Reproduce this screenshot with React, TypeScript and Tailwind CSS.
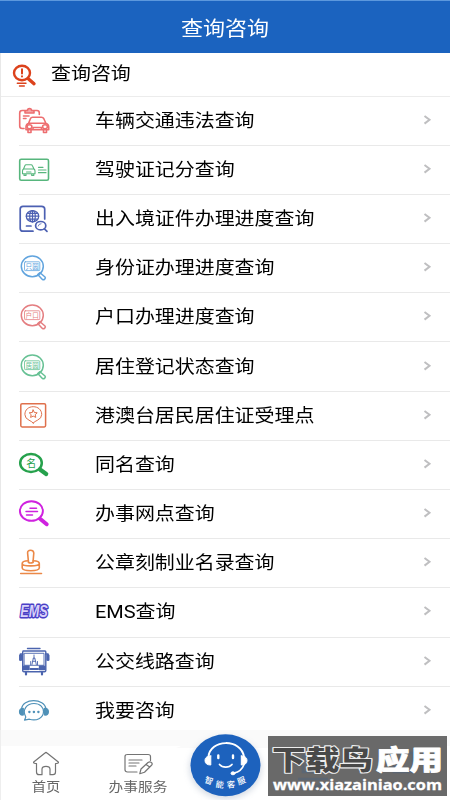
import React from "react";

type IconProps = { children: React.ReactNode; color: string; width?: number };

function Icon({ children, color, width = 1.3 }: IconProps) {
  return (
    <svg
      width="34"
      height="32"
      viewBox="0 0 34 32"
      fill="none"
      stroke={color}
      strokeWidth={width}
      strokeLinecap="round"
      strokeLinejoin="round"
      className="block shrink-0"
    >
      {children}
    </svg>
  );
}

const glyphFont = "'Noto Sans CJK SC', sans-serif";

function Lens({ color, label }: { color: string; label: string }) {
  return (
    <Icon color={color} width={1.5}>
      <ellipse cx="14.3" cy="14.3" rx="11" ry="10.4" />
      <rect x="6.5" y="9.8" width="15.3" height="8.8" rx="0.8" strokeWidth="0.8" />
      <text x="14.2" y="16.8" fontSize="6.6" textAnchor="middle" fill={color} stroke="none" fontFamily={glyphFont}>
        {label}
      </text>
      <path d="M19.7 22.5 L22 20.7 L27 25 C28.2 26.3 25.9 28.5 24.4 27.4 Z" />
    </Icon>
  );
}

const carIcon = (
  <Icon color="#ed6e70" width={1.6}>
    <path d="M6 23.5H4.2Q1.7 23.5 1.7 21V8Q1.7 5.5 4.2 5.5H6.5M16.5 5.5H19Q21.3 5.5 21.3 8V9.5" />
    <path d="M7 8V5.5H9.5Q9.5 3.5 11.5 3.5T13.5 5.5H16V8Z" fill="#ed6e70" fillOpacity=".6" />
    <path d="M5.5 11H11M5.5 13.5H8" />
    <path d="M10.5 18.5L12.5 13.5Q13 12.3 14.5 12.3H23.5Q25 12.3 25.7 13.5L28 18.5Q30.7 19.2 30.7 22V24.8H8V22Q8 19.2 10.5 18.5ZM10.5 18.2H28M10 25V27.5H13V25M25.5 25V27.5H28.5V25M15 24.5V22.5H23.5V24.5" />
    <ellipse cx="11.5" cy="21.8" rx="2.4" ry="2" />
    <ellipse cx="27" cy="21.8" rx="2.4" ry="2" />
  </Icon>
);

const licenceIcon = (
  <Icon color="#57b67d">
    <rect x="1.7" y="5.2" width="28.8" height="21" rx="1.5" strokeWidth="1.6" />
    <path strokeWidth="1.1" d="M5.5 15L7 11.5Q7.3 10.8 8 10.8H13.2Q14 10.8 14.3 11.5L16 15Q17 15.8 17 17V19.7H4.5V17Q4.5 15.8 5.5 15ZM5.5 15H16M6 20V21.4H8V20M13.7 20V21.4H15.8V20M8.5 18H13" />
    <path strokeWidth="1.2" d="M20.5 13.3H25M20.5 16H28M20.5 18.7H28" />
  </Icon>
);

const passportIcon = (
  <Icon color="#4c60b2" width={1.7}>
    <path d="M15 28.2H5Q2.2 28.2 2.2 25.5V6Q2.2 3.3 5 3.3H23.5Q26.7 3.3 26.7 6V16" />
    <ellipse cx="14.5" cy="13.2" rx="6.2" ry="5.6" strokeWidth="1.3" />
    <ellipse cx="14.5" cy="13.2" rx="2.8" ry="5.6" strokeWidth="1.2" />
    <path strokeWidth="1.2" d="M14.5 7.6V18.8M8.3 13.2H20.7M9.5 10.3H19.5M9.5 16.1H19.5" />
    <path d="M8.5 23H13" />
    <ellipse cx="22.7" cy="22.7" rx="5.1" ry="4.2" />
    <path d="M26.4 25.8L29 28.3" />
    <path strokeWidth=".8" d="M20.2 23Q20.5 20.8 23 20.7" />
  </Icon>
);

const residenceIcon = (
  <Icon color="#df704c">
    <rect x="2.8" y="3.7" width="24.8" height="23.2" rx="1.3" strokeWidth="1.5" />
    <path strokeWidth="1" d="M15.2 23Q13.5 21.3 11 20.2Q6.9 18.3 6.9 14.5C6.9 9.7 10.5 6.7 15.2 6.7S23.7 9.7 23.7 14.5Q23.7 18.3 19.5 20.2Q17 21.3 15.2 23Z" />
    <path strokeWidth="1" d="M15.2 10L16.4 12.5L19.2 12.8L17.2 14.7L17.8 17.4L15.2 16.1L12.6 17.4L13.2 14.7L11.2 12.8L14 12.5Z" />
  </Icon>
);

const sameNameIcon = (
  <Icon color="#26a14c" width={2.5}>
    <ellipse cx="13" cy="14" rx="10.8" ry="9" />
    <path d="M22 20.5L28.2 25" strokeWidth="4.2" />
    <text x="13.2" y="17.6" fontSize="10" textAnchor="middle" fill="#26a14c" stroke="none" fontFamily={glyphFont}>名</text>
  </Icon>
);

const branchIcon = (
  <Icon color="#cf22df" width={1.9}>
    <ellipse cx="13.4" cy="13" rx="11.5" ry="9.8" />
    <path d="M22 20.8L28.7 26.2" strokeWidth="4" />
    <path strokeWidth="1.5" d="M12 10.3H18.5M8 13.5H19.5M8.5 17H14.5" />
  </Icon>
);

const stampIcon = (
  <Icon color="#eb8847" width={1.6}>
    <path d="M10.5 15.2L9.6 6Q9.5 3.3 12.5 3.3T15.8 6L15 15.2" />
    <path d="M10.3 13.8Q4.2 14 4.2 16.5Q4.2 18.9 12.8 18.9T21.3 16.5Q21.3 14 15.2 13.8M4.2 16.5V21Q4.5 23.7 12.8 23.7T21.3 21V16.5M2.7 26.5H23.5M10.5 15.5Q12.5 16.4 15 15.5" />
  </Icon>
);

const emsIcon = (
  <Icon color="#4136bd" width={1}>
    <text
      x="2.2"
      y="20.6"
      fontSize="16"
      fontWeight="700"
      fontStyle="italic"
      fill="#d9d2fa"
      stroke="#4a3fc6"
      strokeWidth="2.8"
      paintOrder="stroke"
      textLength="27.5"
      lengthAdjust="spacingAndGlyphs"
      fontFamily="'Liberation Sans', sans-serif"
    >
      EMS
    </text>
  </Icon>
);

const busIcon = (
  <Icon color="#4b64ae" width={1.4}>
    <path d="M9.5 2.5H22M5 5H27Q27.8 5 27.8 6V24.5Q27.8 25.8 26.5 25.8H6Q4.7 25.8 4.7 24.5V6Q4.7 5 5.5 5" />
    <path d="M4.7 8H2.5V14M27.8 8H30V14" strokeWidth="1.7" />
    <path d="M1.8 9.3H3.5V14H1.8ZM29 9.3H30.8V14H29Z" fill="#4b64ae" />
    <path d="M6.5 7.3H26V19.3H6.5Z" strokeWidth=".9" />
    <path d="M16 9V13M14 18.5L15.3 12H16.8L18.3 18.5M14.7 15.3H17.5M12.7 18.8V15.5M19.5 18.8V15.5" strokeWidth=".9" />
    <path d="M5.5 20.3H11V23.5H5.5ZM21.5 20.3H27V23.5H21.5Z" fill="#4b64ae" />
    <path d="M12.5 23H20M8 26.5V28.5M24 26.5V28.5" strokeWidth="2.2" />
  </Icon>
);

const consultIcon = (
  <Icon color="#4f91b8" width={1.2}>
    <path d="M3.5 14C4.5 2.7 26.7 2.7 28 14" />
    <path d="M5.3 13.4V20C2.6 20.5 1.5 19 1.5 16.7S2.7 13.2 5.3 13.4ZM26.5 13.4V20C29.3 20.5 30.4 19 30.4 16.7S29.3 13.2 26.5 13.4Z" fill="#4f91b8" />
    <path d="M6.5 25.2L7.8 22C3.5 14.5 9.3 8.5 16 8.5C22.5 8.5 25.6 12.8 25.5 16.7C25.3 23 18.5 26.5 11.4 24.2Z" />
    <path d="M11.3 17H11.5M15.8 17H16M20.3 17H20.5" strokeWidth="2.3" />
  </Icon>
);

const rows: { label: string; icon: React.ReactNode }[] = [
  { label: "车辆交通违法查询", icon: carIcon },
  { label: "驾驶证记分查询", icon: licenceIcon },
  { label: "出入境证件办理进度查询", icon: passportIcon },
  { label: "身份证办理进度查询", icon: <Lens color="#61a4de" label="只圆" /> },
  { label: "户口办理进度查询", icon: <Lens color="#e47e81" label="户口" /> },
  { label: "居住登记状态查询", icon: <Lens color="#67c194" label="居圆" /> },
  { label: "港澳台居民居住证受理点", icon: residenceIcon },
  { label: "同名查询", icon: sameNameIcon },
  { label: "办事网点查询", icon: branchIcon },
  { label: "公章刻制业名录查询", icon: stampIcon },
  { label: "EMS查询", icon: emsIcon },
  { label: "公交线路查询", icon: busIcon },
  { label: "我要咨询", icon: consultIcon },
];

function Row({ label, icon }: { label: string; icon: React.ReactNode }) {
  return (
    <li className="ml-[19px] flex h-[49.2px] shrink-0 items-center border-b border-[#e9e9e9]">
      <span className="-ml-px flex w-[76.5px] shrink-0">{icon}</span>
      <span className="origin-left scale-x-[1.108] text-[18px] leading-6 whitespace-nowrap text-black">{label}</span>
      <svg className="mr-[18px] mb-[2px] ml-auto block" width="9" height="10" viewBox="0 0 9 10" fill="none" stroke="#bfbfc1" strokeWidth="2">
        <path d="M1.5 1L6.5 4.8L1.5 8.6" />
      </svg>
    </li>
  );
}

function Assistant() {
  return (
    <svg className="absolute -top-[22px] left-[173px]" width="104" height="76" viewBox="0 0 104 76" fill="none">
      <defs>
        <filter id="soft" x="-20%" y="-20%" width="140%" height="140%">
          <feGaussianBlur stdDeviation="3" />
        </filter>
      </defs>
      <path d="M2 24C15 21 21 6 51 6S87 21 102 24Z" fill="#fafafa" />
      <ellipse cx="51.5" cy="44" rx="36" ry="31" fill="#96a5bc" opacity=".4" filter="url(#soft)" />
      <ellipse cx="51.5" cy="41.3" rx="35" ry="31" fill="#1d62bd" />
      <g stroke="#fff" strokeLinecap="round">
        <path d="M34.5 33C35.5 15 67.5 14 70 33" strokeWidth="2" />
        <path d="M36.8 32V41C33 41 31 39.4 31 36.5S33 32 36.8 32ZM67.3 32V41C71 41 73 39.4 73 36.5S71 32 67.3 32Z" fill="#fff" strokeWidth="1" />
        <path d="M44.3 31.5V34M59 31.5V34" strokeWidth="2.4" />
        <path d="M45.5 40.5C48.5 44 55 44 58 40.5M70 40.5Q67.5 47.5 60 49" strokeWidth="1.7" />
        <ellipse cx="59" cy="49.3" rx="2" ry="1.5" fill="#fff" />
      </g>
      <g fill="#fff" fontFamily={glyphFont} fontSize="8.3" fontWeight="500" textAnchor="middle">
        <text transform="translate(34 59.5) rotate(20)">智</text>
        <text transform="translate(45.3 63.5) rotate(7)">能</text>
        <text transform="translate(57.3 63.5) rotate(-7)">客</text>
        <text transform="translate(68.5 59.5) rotate(-20)">服</text>
      </g>
    </svg>
  );
}

function Watermark() {
  return (
    <svg className="absolute -top-[10px] left-[267px]" width="179" height="60" viewBox="0 0 179 60">
      <rect width="179" height="60" fill="#696969" />
      <g fill="none" stroke="#50647c" strokeWidth="2.5" opacity=".55">
        <path d="M35 20H54V36H35ZM41 26H50M30 43H60M30 50H60M126 17H145V36H126Z" />
      </g>
      <g fontFamily={glyphFont} fontWeight="900" fontSize="27" strokeLinejoin="round">
        <text x="4" y="34" textLength="101" lengthAdjust="spacingAndGlyphs" fill="#494949" stroke="#ededed" strokeWidth="2.2" paintOrder="stroke">下载鸟</text>
        <text x="108" y="34" textLength="67" lengthAdjust="spacingAndGlyphs" fill="#fff" stroke="#fff" strokeWidth=".8">应用</text>
      </g>
      <text x="5" y="53.5" fontSize="15" fontWeight="700" fill="#fff" stroke="#fff" strokeWidth=".3" textLength="169" lengthAdjust="spacingAndGlyphs" fontFamily="'Open Sans', sans-serif">
        www.xiazainiao.com
      </text>
    </svg>
  );
}

export default function App() {
  return (
    <div className="flex h-[800px] w-[450px] flex-col overflow-hidden bg-white font-['Roboto','Noto_Sans_CJK_SC',sans-serif]">
      <header className="flex h-[53px] shrink-0 items-center justify-center border-t border-[#5c98dd] bg-[#1b63bf] pt-[3px]">
        <h1 className="scale-x-[1.1] text-[20px] leading-7 text-white">查询咨询</h1>
      </header>
      <main className="flex h-[677px] shrink-0 flex-col overflow-hidden border-l border-[#e8e8e8]">
        <div className="flex h-[43.5px] shrink-0 items-center border-b border-[#ececec]">
          <svg className="mt-[3px] ml-[11px] block shrink-0" width="25" height="24" viewBox="0 0 25 24" fill="none" stroke="#dc421c" strokeLinecap="round">
            <ellipse cx="10" cy="9" rx="8" ry="7.3" strokeWidth="2.4" />
            <path d="M16 14.5L22 19.7" strokeWidth="3.4" />
            <path d="M10 5.3V9.5M10 12.3V12.4" strokeWidth="2" />
            <path d="M5.3 19.3H14M7.5 22H12.3" strokeWidth="1.4" />
          </svg>
          <h2 className="ml-[13.5px] origin-left scale-x-[1.108] text-[18px] leading-6 text-black">查询咨询</h2>
        </div>
        <ul className="-ml-px flex flex-col">
          {rows.map((row) => (
            <Row key={row.label} {...row} />
          ))}
        </ul>
      </main>
      <div className="h-4 shrink-0 border-l border-[#eee] bg-[#fafafa]" />
      <nav className="relative flex h-[54px] shrink-0 border-l border-[#eee] bg-white text-[13px] leading-4 text-[#666]">
        <div className="flex w-[90px] flex-col items-center pt-[5px]">
          <svg width="28" height="25" viewBox="0 0 28 25" fill="none" stroke="#747474" strokeWidth="1.2" strokeLinejoin="round" strokeLinecap="round">
            <path d="M13 2Q14 1 15 2L26 10.7Q27.3 12 24.5 12.5H23.5V21Q23.5 23.7 21 23.7H18V18Q17.8 15.3 14 15.3T10 18V23.7H7Q4.5 23.7 4.5 21V12.5H3.5Q.7 12 2 10.7Z" />
          </svg>
          <span className="mt-[3px] scale-x-[1.1]">首页</span>
        </div>
        <div className="flex w-[94px] flex-col items-center pt-[6px]">
          <svg width="30" height="24" viewBox="0 0 30 24" fill="none" stroke="#747474" strokeWidth="1.2" strokeLinejoin="round" strokeLinecap="round">
            <path d="M14 20H4.5Q2 20 2 17.7V4.5Q2 2.5 4.5 2.5H25Q27.5 2.5 27.5 4.5V8.5M6 8H19M6 11H16M6 14H13M16.8 21.7L18 17L25 10.5Q27.5 9 29 11.2Q29.5 12.5 28.5 13.3L21.5 20.2ZM23 12.5L26.7 15" />
          </svg>
          <span className="mt-[3px] scale-x-[1.13]">办事服务</span>
        </div>
        <Assistant />
        <Watermark />
      </nav>
    </div>
  );
}
